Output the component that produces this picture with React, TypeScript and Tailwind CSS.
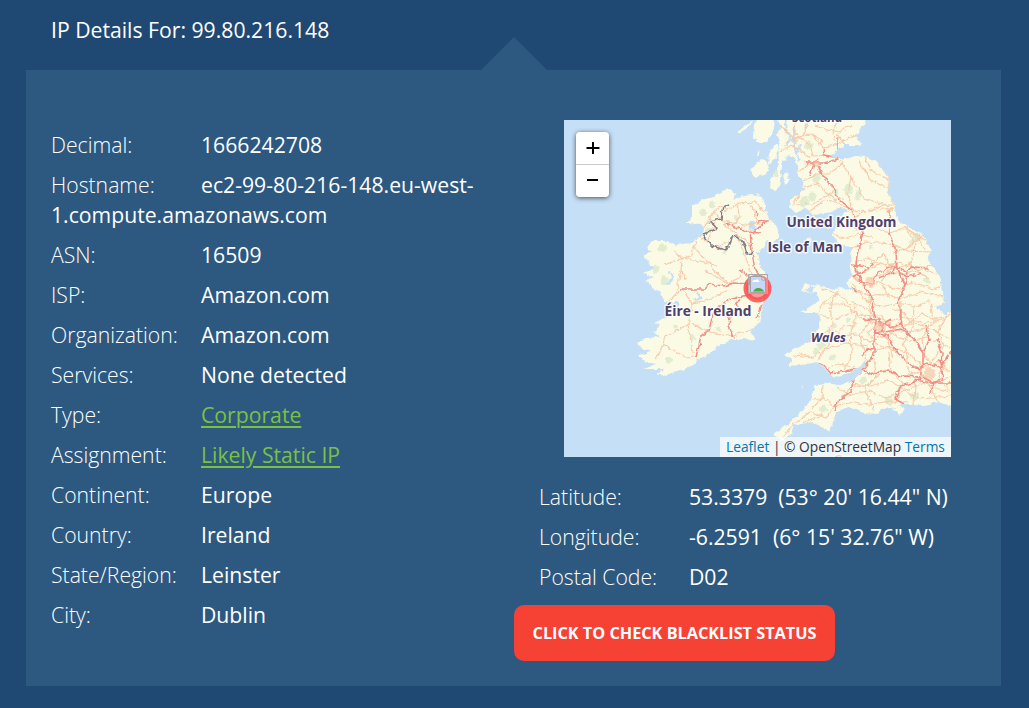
import type { ReactNode } from "react";

type Detail = { label: string; value: string; link?: boolean };

const details: Detail[] = [
  { label: "Decimal:", value: "1666242708" },
  { label: "Hostname:", value: "ec2-99-80-216-148.eu-west-1.compute.amazonaws.com" },
  { label: "ASN:", value: "16509" },
  { label: "ISP:", value: "Amazon.com" },
  { label: "Organization:", value: "Amazon.com" },
  { label: "Services:", value: "None detected" },
  { label: "Type:", value: "Corporate", link: true },
  { label: "Assignment:", value: "Likely Static IP", link: true },
  { label: "Continent:", value: "Europe" },
  { label: "Country:", value: "Ireland" },
  { label: "State/Region:", value: "Leinster" },
  { label: "City:", value: "Dublin" },
];

const position: Detail[] = [
  { label: "Latitude:", value: "53.3379\u00a0 (53° 20' 16.44\" N)" },
  { label: "Longitude:", value: "-6.2591\u00a0 (6° 15' 32.76\" W)" },
  { label: "Postal Code:", value: "D02" },
];

const IRELAND =
  "M163 68L173 74L168 80L175 77L187 75L199 78L202 90L205 100L210 103L214 111L215 117L207 124L203 119L200 128L193 133L195 143L200 152L201 165L199 184L195 202L187 210L191 220L180 218L167 220L153 227L143 235L133 240L127 247L110 252L100 256L92 254L100 249L80 249L92 244L82 242L75 235L87 232L76 227L73 222L82 218L97 217L90 212L97 205L90 203L103 197L113 190L115 182L100 182L97 173L88 167L82 160L90 157L80 154L92 147L85 145L81 135L88 132L83 128L88 121L103 121L110 125L127 123L138 115L140 110L137 104L123 103L128 97L128 88L137 80L150 77L157 72Z";

const BRITAIN =
  "M218 -8L214 0L217 8L212 14L216 20L213 27L215 33L213 48L207 58L206 68L210 71L215 68L217 53L219 41L225 35L232 40L234 53L240 63L237 72L227 81L226 88L232 92L242 88L250 95L267 92L277 87L284 90L277 98L269 112L270 118L279 126L290 127L286 134L287 141L285 148L289 156L282 163L290 172L277 167L269 170L259 166L248 165L241 171L252 173L256 180L247 186L237 192L250 192L257 196L254 207L250 220L238 225L220 235L229 239L224 247L237 245L254 242L262 250L270 257L279 256L290 250L304 239L296 253L287 262L275 265L259 263L250 267L247 280L237 292L224 304L209 315L217 321L227 315L230 305L250 302L259 308L265 312L270 302L272 292L284 287L300 293L314 294L317 289L334 287L339 284L349 284L360 285L374 282L392 287L392 190L381 195L372 187L380 182L379 170L374 153L364 141L367 130L360 117L347 108L337 103L332 96L330 85L325 73L324 57L314 43L300 36L290 35L279 40L267 36L275 30L280 25L297 25L292 15L300 5L303 -5Z";

const ISLANDS =
  "M173 10L180 7L188 1L184 9L174 13ZM190 5L195 -4L211 -3L210 8L208 14L203 22L192 22L189 16ZM194 31L196 35L193 37ZM186 50L190 45L194 41L200 40L206 47L201 55L190 57ZM219 55L223 51L226 60L221 65ZM238 124L247 117L246 124L238 128L235 126ZM205 34L211 24L215 26L211 40L204 45ZM192 74L196 75L194 77ZM237 169L242 164L251 168L248 172L240 173ZM328 290L335 286L341 289L336 294ZM238 265L239 268L237 269Z";

const LOCHS = "M224 -3L221 8L226 18L222 26M231 8L229 20L232 33M236 24L232 34L236 40M246 -3L241 8";

const MINOR_ROADS =
  "M159 86L150 90L139 110L130 125L128 135L118 139L110 130M100 145L119 138L140 142L154 146M129 126L142 140L151 152L164 162M118 139L117 150L123 160M117 150L113 170M118 168L128 184L148 178L164 170M118 168L96 190M128 184L124 205L129 233M124 205L101 216L99 224L121 237L131 236M128 203L145 212L170 216L190 209M99 224L92 240M161 104L150 91L146 101M161 91L174 83L191 82L201 92M159 104L170 112L184 122L190 131M160 101L180 105L197 104M173 85L176 97L169 106M151 103L144 122M187 84L193 102M173 116L184 143L188 154M134 115L153 128L166 120M177 155L165 164L141 150" +
  "M216 5L224 12L231 20L240 14M216 31L224 27L231 24M198 156L208 168M232 -1L230 12L246 25L249 36L262 35L274 39M222 23L235 16L249 15L259 28L273 24M245 0L240 12L229 26L247 37M274 0L269 10L270 21M238 42L248 44L254 39M233 53L246 43M239 61L253 54L266 54L280 42M276 41L287 57L284 75L289 91L310 90L331 88M293 39L307 60L326 70M286 57L300 78L324 86M230 84L238 69L253 63L273 83L288 90M246 91L260 81L280 78M301 36L306 50L324 59M270 71L249 84L228 85M272 25L287 17L298 15M251 6L275 12L288 5M273 14L282 27M259 37L256 19L249 15" +
  "M289 91L292 110L307 107L326 113L343 108L361 120M288 99L301 91L320 85L331 85M270 114L280 119L295 114L310 118M287 130L301 122L327 124L344 131L367 132M291 143L304 138L319 145L335 143L352 148L370 146M296 154L315 144L331 149L345 144L365 159M307 159L323 152L341 154L360 149L375 155M319 133L327 148L317 162L325 178M341 107L352 126L345 146M358 116L342 129L329 133M289 156L300 166L316 162L334 170L348 162L370 169L387 161M292 170L307 177L322 174L337 179L356 172L379 177M288 163L299 178L318 187L335 183L350 187L366 181M258 168L274 174L285 184L302 188L320 203L340 197L360 204L382 198M259 184L279 184L295 195L316 196L329 208L350 203L373 211M257 195L272 199L289 192L302 201L322 205L342 213L365 208L387 220M252 215L269 210L279 216L293 214L306 222L324 213L346 221L363 217L387 228M235 234L248 237L260 230L270 218L279 207L290 206M258 249L275 244L290 247M254 240L261 229L282 223L304 227M274 170L266 185L268 204L260 222M289 180L292 198L286 213L288 232L281 250" +
  "M305 177L307 200L296 215L302 239M337 182L336 200L323 218L329 238M350 187L349 206L339 223L345 244M366 181L369 201L358 219L361 237L375 249M382 196L374 211L379 226L367 243L386 251M305 231L327 227L344 233L360 247L384 239M300 255L321 250L337 257L356 252L367 263L386 257M287 264L306 266L323 260L343 270L358 263L385 272M274 267L285 275L304 271L323 278L340 271L356 279L386 276M248 280L260 278L271 286L290 282L305 285L325 281L344 282M219 317L231 303L246 292L262 297L273 282M227 314L241 302L259 296M259 264L258 279L247 289M310 238L312 255L301 269L310 292M325 233L327 253L338 262L332 283M342 246L352 259L349 284M361 235L356 250L366 268L374 282M382 240L375 257L386 271M271 285L289 266L301 267L315 254M317 202L303 213L315 225L331 231M329 188L342 194L346 203M306 147L319 134M345 204L358 194L370 199L387 195";

const MAJOR_ROADS =
  "M116 169L140 169L145 164L160 166L170 163L188 164M162 103L184 112L198 113M193 102L202 101L190 112M186 112L188 132L191 150L197 157M176 150L187 158L194 167M180 176L163 180L149 194L145 210L137 216L135 226L132 236M189 173L178 178L172 183L174 190L166 196L165 205L169 218M197 184L193 199M191 91L194 95" +
  "M274 17L274 39L260 43L242 43M259 29L260 35L273 37M254 38L250 44L246 55M254 45L258 56L268 66L276 80L288 90M289 91L290 99L299 111L296 123L293 135L292 148L298 162L306 174L312 201L310 216L310 235L298 250M325 90L325 113L332 131L333 149L341 166L334 181L338 205L352 222L359 233L359 244M288 157L302 150L309 143M287 145L296 146L304 147M292 148L296 163L309 163L314 152L331 146L342 151L349 147L365 148M314 158L329 153L331 144M333 151L343 157L358 153M343 152L341 167M299 199L315 200L320 211L311 213M315 206L327 199M311 213L324 216L332 231L346 245L356 250M320 212L338 209L350 220M363 206L365 220L360 231M373 219L378 233L377 245M387 231L376 248M310 228L302 230L298 236M255 242L263 249L266 253L281 251L296 248L304 254L324 251L337 256L356 257M298 250L289 259L287 272L273 282L271 290M359 257L345 264L336 266L331 279L340 284M360 258L371 263L387 263M357 252L356 261L367 263L378 260L379 252L372 245L359 244L357 252M369 263L366 273M287 167L293 172M337 189L337 204L327 208L315 199";

const WOODS = [
  [284, 69, 5], [248, 76, 4], [240, 82, 5], [252, 58, 4], [272, 72, 3], [232, 72, 3],
  [212, 53, 3], [245, 25, 4], [230, 20, 3], [294, 75, 4], [352, 118, 4], [347, 122, 2],
  [307, 126, 2], [249, 211, 3], [257, 225, 4], [270, 206, 3], [268, 238, 3], [252, 231, 3],
  [284, 200, 2], [280, 220, 3], [299, 260, 3], [325, 281, 4], [259, 289, 4], [304, 181, 2],
  [148, 85, 3], [139, 92, 3], [98, 128, 4], [100, 160, 4], [111, 207, 2], [128, 217, 3],
  [155, 209, 2], [144, 111, 3], [172, 98, 2], [181, 193, 3], [105, 240, 3], [92, 149, 3],
  [351, 277, 4], [372, 199, 2], [363, 161, 3], [160, 132, 2],
] as const;

function MapDrawing() {
  return (
    <svg viewBox="0 0 387 337" className="block h-[337px] w-[387px]" aria-label="Map of Ireland and Great Britain">
      <defs>
        <clipPath id="land">
          <path d={IRELAND + BRITAIN + ISLANDS} />
        </clipPath>
        <filter id="coast" x="-10" y="-10" width="407" height="357" filterUnits="userSpaceOnUse">
          <feTurbulence type="fractalNoise" baseFrequency="0.18" numOctaves="3" seed="8" result="n" />
          <feDisplacementMap in="SourceGraphic" in2="n" scale="5" xChannelSelector="R" yChannelSelector="G" />
        </filter>
      </defs>
      <rect width="387" height="337" fill="#c5dff6" />
      <g filter="url(#coast)">
        <path d={IRELAND + BRITAIN + ISLANDS} fill="#fbfae4" />
        <g clipPath="url(#land)">
          {WOODS.map(([x, y, r]) => (
            <ellipse key={`${x}-${y}`} cx={x} cy={y} rx={r} ry={r * 1.1} fill="#d6e7c4" opacity="0.7" />
          ))}
          <path d="M105 151L109 156L104 164M133 172L137 178L131 181M142 119L146 123" stroke="#c5dff6" strokeWidth="2.5" fill="none" />
          <path d={LOCHS} stroke="#c5dff6" strokeWidth="2" fill="none" />
          <path d="M186 101L193 102L191 111L184 110Z" fill="#c5dff6" />
          <path d={MINOR_ROADS} fill="none" stroke="#f7cbab" strokeWidth="1.15" />
          <path d="M298 28L314 43L324 57L325 73L330 85M254 194L258 184L274 172M341 108L355 118L360 130M250 238L230 236" fill="none" stroke="#f7cbab" />
          <path d={MAJOR_ROADS} fill="none" stroke="#ee8f88" strokeWidth="1.5" />
          <g fill="#f7bea0" opacity="0.6">
            <circle cx="366" cy="253" r="6" />
            <circle cx="316" cy="207" r="5" />
            <circle cx="306" cy="162" r="5" />
            <circle cx="327" cy="147" r="3" />
            <circle cx="326" cy="90" r="3" />
            <circle cx="252" cy="44" r="3" />
            <circle cx="297" cy="250" r="2" />
          </g>
        </g>
        <path d="M165 84L160 86L157 99L146 102L152 107L149 111L139 114L145 122L148 126L161 130L166 125L168 117L173 116L177 120L181 127L183 134L191 132" fill="none" stroke="#7f7a86" strokeWidth="1.5" />
      </g>
      <g
        fontFamily="'Open Sans', 'Noto Sans', sans-serif"
        fontWeight="700"
        fill="#4f4068"
        stroke="#fff"
        strokeOpacity="0.8"
        strokeWidth="3"
        strokeLinejoin="round"
        paintOrder="stroke"
      >
        <text x="228" y="1.5" fontSize="13" textLength="50" lengthAdjust="spacingAndGlyphs">Scotland</text>
        <text x="222.5" y="107" fontSize="13.7" textLength="110" lengthAdjust="spacingAndGlyphs">United Kingdom</text>
        <text x="203.5" y="131.5" fontSize="13.7" textLength="75" lengthAdjust="spacingAndGlyphs">Isle of Man</text>
        <text x="100.5" y="196" fontSize="13.7" textLength="87" lengthAdjust="spacingAndGlyphs">Éire - Ireland</text>
        <text x="247" y="221.5" fontSize="12.5" fontStyle="italic" textLength="35" lengthAdjust="spacingAndGlyphs">Wales</text>
        <text x="269" y="343.5" fontSize="12" fontWeight="600" fillOpacity="0.7" textLength="62" lengthAdjust="spacingAndGlyphs">Guernsey</text>
      </g>
      <circle cx="193.5" cy="168.5" r="11.5" fill="#f87c7c" fillOpacity="0.75" stroke="#f94d4d" strokeOpacity="0.85" strokeWidth="5" />
      <g>
        <path d="M184.5 154.5H203.5V173.5H184.5Z" fill="#fff" fillOpacity="0.25" stroke="#b0a8a8" />
        <path d="M186.5 156.5H198L201.5 160V172.5H186.5Z" fill="#c6d6f6" stroke="#999" strokeWidth="0.8" />
        <path d="M198 156.5V160H201.5Z" fill="#fff" stroke="#888" strokeWidth="0.7" />
        <path d="M188 162Q189 159.5 191.5 160Q194 158 195.5 162Z" fill="#fff" />
        <path d="M189 171.5Q191 167.5 195 168Q199 168.5 200 171.5Z" fill="#4ba946" />
      </g>
    </svg>
  );
}

function Row({ label, value, link }: Detail) {
  return (
    <li className="py-[5px] leading-[30px]">
      <span className="inline-block w-[150px] font-light">{label}</span>
      {link ? (
        <a href="#" className="text-[#7ac143] underline decoration-2 underline-offset-[3px]">
          {value}
        </a>
      ) : (
        <span className="font-medium">{value}</span>
      )}
    </li>
  );
}

function ZoomButton({ children }: { children: ReactNode }) {
  return <button className="flex h-8 w-[33px] justify-center bg-white pt-[9px] pl-px">{children}</button>;
}

export default function App() {
  return (
    <main className="h-[708px] w-[1029px] overflow-hidden bg-[#1f4972] px-[26px] pr-7 font-['Open_Sans',sans-serif] text-[21.2px] text-white">
      <h1 className="h-[70px] px-[25px] pt-[15px] leading-[30px]">IP Details For: 99.80.216.148</h1>
      <section className="relative flex h-[616px] bg-[#2d5980]">
        <svg className="absolute -top-[33px] left-[455px] h-[33px] w-[66px]" viewBox="0 0 66 33">
          <path d="M0 33L33 0L66 33Z" fill="#2d5980" />
        </svg>
        <ul className="w-[488px] pt-[55px] pr-[13px] pl-[25px]">
          {details.map((d) => (
            <Row key={d.label} {...d} />
          ))}
        </ul>
        <div className="w-[487px] pt-[50px]">
          <div className="relative ml-[50px] h-[337px] w-[387px] overflow-hidden">
            <MapDrawing />
            <div className="absolute top-3 left-3 flex w-[33px] flex-col gap-px overflow-hidden rounded-[4px] bg-[#ccc] shadow-[0_1px_5px_rgba(0,0,0,0.65)]">
              <ZoomButton>
                <svg width="14" height="14" viewBox="0 0 14 14" aria-label="Zoom in">
                  <path d="M0.5 7H13.5M7 1V13" stroke="#000" strokeWidth="2" />
                </svg>
              </ZoomButton>
              <ZoomButton>
                <svg width="14" height="14" viewBox="0 0 14 14" aria-label="Zoom out">
                  <path d="M1 6H12" stroke="#000" strokeWidth="2" />
                </svg>
              </ZoomButton>
            </div>
            <div className="absolute right-0 bottom-0 flex h-5 w-[231px] items-center justify-center bg-white/70 text-[13.75px] whitespace-pre text-[#333]">
              <a href="#" className="text-[#0078a8]">Leaflet</a> | © OpenStreetMap <a href="#" className="text-[#0078a8]">Terms</a>
            </div>
          </div>
          <ul className="pt-[20px] pl-[25px]">
            {position.map((d) => (
              <Row key={d.label} {...d} />
            ))}
          </ul>
          <button className="mt-[8px] flex h-14 w-[321px] items-center justify-center rounded-[10px] bg-[#f64234] text-[16.25px] font-bold">
            CLICK TO CHECK BLACKLIST STATUS
          </button>
        </div>
      </section>
    </main>
  );
}
